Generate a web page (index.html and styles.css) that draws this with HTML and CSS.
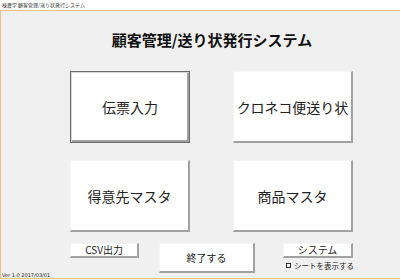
FILE: index.html
```html
<!DOCTYPE html>
<html lang="ja">
<head>
<meta charset="utf-8">
<title>顧客管理/送り状発行システム</title>
<link rel="stylesheet" href="styles.css">
</head>
<body>
<div class="titlebar">検農学 顧客管理/送り状発行システム</div>
<div class="window">
  <div class="content">
    <h1 class="title">顧客管理/送り状発行システム</h1>
    <div class="grid">
      <button class="btn big default">伝票入力</button>
      <button class="btn big">クロネコ便送り状</button>
      <button class="btn big">得意先マスタ</button>
      <button class="btn big">商品マスタ</button>
    </div>
    <div class="footer">
      <button class="btn small">CSV出力</button>
      <button class="btn exit">終了する</button>
      <div class="sys">
        <button class="btn small">システム</button>
        <label class="chk"><span class="box"></span>シートを表示する</label>
      </div>
    </div>
  </div>
  <div class="version">Ver 1.0 2017/03/01</div>
</div>
</body>
</html>
```

FILE: styles.css
```css
html, body {
  margin: 0;
  padding: 0;
}
body {
  background: #f0f0f0;
  font-family: "Noto Sans CJK JP", "Noto Sans", sans-serif;
  color: #1e1e1e;
  width: 400px;
  height: 280px;
  overflow: hidden;
}
.titlebar {
  height: 10px;
  line-height: 10px;
  font-size: 5px;
  background: #ffffff;
  color: #333;
  padding-left: 2px;
  border-bottom: 1px solid #e3c47e;
  white-space: nowrap;
}
.window {
  border-left: 1px solid #e3c47e;
  border-bottom: 1px solid #e3c47e;
  background: #f0f0f0;
}
.content {
  margin-left: 69px;
  width: 284px;
}
.title {
  margin: 0;
  padding-top: 19px;
  font-size: 15px;
  line-height: 20px;
  font-weight: bold;
  text-align: center;
  color: #111;
  white-space: nowrap;
}
.grid {
  margin-top: 21px;
  display: grid;
  grid-template-columns: 120px 120px;
  grid-template-rows: 72px 72px;
  column-gap: 43px;
  row-gap: 17px;
}
.btn {
  font-family: "Noto Sans CJK JP", "Noto Sans", sans-serif;
  background: #ffffff;
  color: #222;
  padding: 0;
  margin: 0;
  border-style: solid;
  border-width: 1px 2px 2px 1px;
  border-color: #f4f4f4 #a2a2a2 #a2a2a2 #f4f4f4;
  white-space: nowrap;
  display: flex;
  align-items: center;
  justify-content: center;
}
.big {
  width: 120px;
  height: 72px;
  font-size: 14px;
}
.default {
  border: 1px solid #6a6a6a;
  box-shadow: inset 1px 1px 0 #d6d6d6, inset -2px -2px 0 #a0a0a0;
}
.footer {
  margin-top: 11px;
  display: flex;
  align-items: flex-start;
}
.small {
  width: 70px;
  height: 15px;
  font-size: 10px;
  line-height: 12px;
}
.exit {
  margin-left: 20px;
  width: 97px;
  height: 30px;
  font-size: 10px;
}
.sys {
  margin-left: 28px;
  display: flex;
  flex-direction: column;
  align-items: flex-start;
}
.chk {
  margin-top: 3px;
  margin-left: 3px;
  display: flex;
  align-items: center;
  font-size: 7.5px;
  line-height: 9px;
  color: #222;
  white-space: nowrap;
}
.box {
  width: 3px;
  height: 3px;
  border: 1px solid #333;
  background: #fff;
  margin-right: 3px;
}
.version {
  height: 5px;
  line-height: 5px;
  font-size: 5px;
  padding-left: 1px;
  color: #222;
  white-space: nowrap;
  font-family: "DejaVu Sans", sans-serif;
}
```
